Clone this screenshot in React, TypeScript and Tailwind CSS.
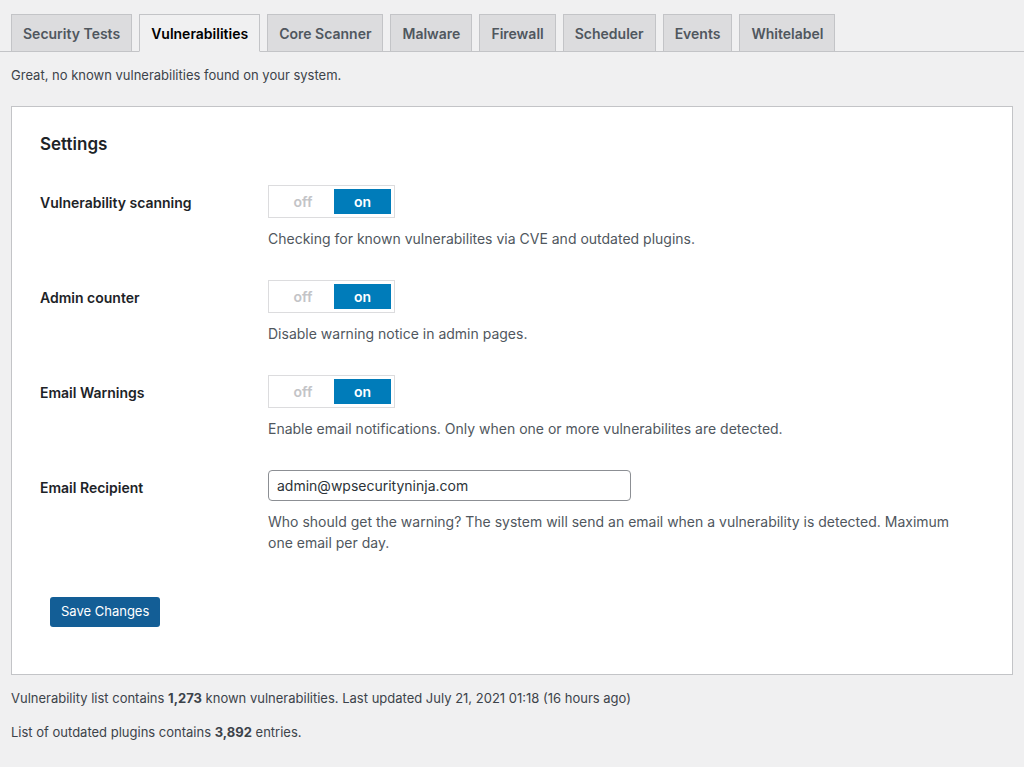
const tabs = ["Security Tests", "Vulnerabilities", "Core Scanner", "Malware", "Firewall", "Scheduler", "Events", "Whitelabel"];

function Toggle() {
  return (
    <div className="flex h-[33px] w-[127px] items-center border border-[#dcdcde] bg-white p-[3px]">
      <div className="flex flex-1 items-center justify-center text-[14px] font-semibold text-[#c3c4c7]">off</div>
      <div className="flex h-[25px] w-[57px] items-center justify-center bg-[#007cba] text-[14px] font-semibold text-white">on</div>
    </div>
  );
}

function Row({ label, children, desc }: { label: string; children: React.ReactNode; desc: React.ReactNode }) {
  return (
    <div className="flex">
      <div className="w-[228px] pt-[7px] text-[14px] font-semibold text-[#1d2327]">{label}</div>
      <div className="flex-1">
        {children}
        <p className="mt-[10px] max-w-[700px] text-[14px] leading-[21px] text-[#50575e]">{desc}</p>
      </div>
    </div>
  );
}

export default function App() {
  return (
    <div className="min-h-[767px] bg-[#f0f0f1] text-[#3c434a]" style={{ fontFamily: "Inter, 'Noto Sans', sans-serif" }}>
      <div className="flex gap-[7px] border-b border-[#c3c4c7] px-[11px] pt-[14px]">
        {tabs.map((t) => (
          <div
            key={t}
            className={
              "-mb-px flex h-[38px] items-center border border-[#c3c4c7] px-[11px] text-[14px] font-semibold " +
              (t === "Vulnerabilities" ? "border-b-[#f0f0f1] bg-[#f0f0f1] text-black" : "bg-[#dcdcde] text-[#50575e]")
            }
          >
            {t}
          </div>
        ))}
      </div>
      <p className="mt-[14px] px-[11px] text-[13px]">Great, no known vulnerabilities found on your system.</p>
      <div className="mx-[11px] mt-[20px] h-[569px] border border-[#c3c4c7] bg-white px-[28px] pt-[25px]">
        <h2 className="text-[17px] font-semibold text-[#1d2327]">Settings</h2>
        <div className="mt-[28px] flex flex-col gap-[31px]">
          <Row label="Vulnerability scanning" desc="Checking for known vulnerabilites via CVE and outdated plugins.">
            <Toggle />
          </Row>
          <Row label="Admin counter" desc="Disable warning notice in admin pages.">
            <Toggle />
          </Row>
          <Row label="Email Warnings" desc="Enable email notifications. Only when one or more vulnerabilites are detected.">
            <Toggle />
          </Row>
          <Row
            label="Email Recipient"
            desc="Who should get the warning? The system will send an email when a vulnerability is detected. Maximum one email per day."
          >
            <div className="flex h-[31px] w-[363px] items-center rounded border border-[#8c8f94] px-[8px] text-[14px] text-[#2c3338]">
              admin@wpsecurityninja.com
            </div>
          </Row>
        </div>
        <button className="ml-[10px] mt-[44px] h-[30px] rounded-[3px] bg-[#135e96] px-[11px] text-[13px] text-white">Save Changes</button>
      </div>
      <p className="mt-[14px] px-[11px] text-[13px]">
        Vulnerability list contains <b>1,273</b> known vulnerabilities. Last updated July 21, 2021 01:18 (16 hours ago)
      </p>
      <p className="mt-[15px] px-[11px] text-[13px]">
        List of outdated plugins contains <b>3,892</b> entries.
      </p>
    </div>
  );
}
